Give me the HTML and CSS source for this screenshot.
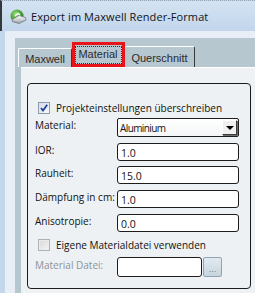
FILE: index.html
```html
<!DOCTYPE html>
<html lang="de">
<head>
<meta charset="utf-8">
<link rel="stylesheet" href="styles.css">
</head>
<body>
<div class="window">
  <div class="titlebar">
    <svg class="app-icon" width="17" height="16" viewBox="0 0 17 16">
      <defs>
        <radialGradient id="g" cx="0.4" cy="0.35" r="0.7">
          <stop offset="0" stop-color="#9fe07a"/>
          <stop offset="0.6" stop-color="#43a238"/>
          <stop offset="1" stop-color="#1f6a22"/>
        </radialGradient>
        <linearGradient id="s" x1="0" y1="0" x2="0" y2="1">
          <stop offset="0" stop-color="#ffffff"/>
          <stop offset="1" stop-color="#9aa3ab"/>
        </linearGradient>
      </defs>
      <circle cx="7" cy="7" r="6.5" fill="url(#g)"/>
      <path d="M2 10.5 L9 6.5 L15.5 8.5 L16 11 L9 14.5 L2.5 12.5 Z" fill="url(#s)" stroke="#6d767e" stroke-width="0.8"/>
      <path d="M5 7 L8 4.5 L10 6" fill="none" stroke="#ffffff" stroke-width="1.4"/>
    </svg>
    <span class="title">Export im Maxwell Render-Format</span>
  </div>
  <div class="client">
    <div class="dialog">
      <div class="tabs">
        <div class="tab tab-first">Maxwell</div>
        <div class="tab tab-selected"><span class="focus">Material</span></div>
        <div class="tab tab-last">Querschnitt</div>
      </div>
      <div class="page">
        <div class="group">
          <div class="check-row">
            <span class="cb cb-checked">
              <svg width="10" height="10" viewBox="0 0 10 10"><path d="M2 5 L4 7.5 L8.2 1.8" fill="none" stroke="#1f3f9e" stroke-width="1.8"/></svg>
            </span>
            <span class="check-text">Projekteinstellungen überschreiben</span>
          </div>
          <div class="fields">
            <span class="lbl">Material:</span>
            <div class="combo"><span class="combo-text">Aluminium</span><span class="drop"><span class="tri"></span></span></div>
            <span class="lbl lbl-ior">IOR:</span>
            <div class="input input-ior">1.0</div>
            <span class="lbl">Rauheit:</span>
            <div class="input">15.0</div>
            <span class="lbl">Dämpfung in cm:</span>
            <div class="input">1.0</div>
            <span class="lbl">Anisotropie:</span>
            <div class="input">0.0</div>
          </div>
          <div class="check-row check-row-2">
            <span class="cb cb-disabled"></span>
            <span class="check-text">Eigene Materialdatei verwenden</span>
          </div>
          <div class="file-row">
            <span class="lbl lbl-disabled">Material Datei:</span>
            <div class="input input-file"></div>
            <div class="browse">...</div>
          </div>
        </div>
      </div>
    </div>
  </div>
</div>
</body>
</html>
```

FILE: styles.css
```css
* { box-sizing: border-box; }

html, body {
  margin: 0;
  padding: 0;
}

body {
  width: 255px;
  height: 293px;
  overflow: hidden;
  font-family: "Open Sans", "Noto Sans", sans-serif;
  color: #111;
}

.window {
  width: 255px;
  height: 293px;
  display: flex;
  flex-direction: column;
  background: #c4d6eb;
}

.titlebar {
  height: 31px;
  flex: none;
  display: flex;
  align-items: center;
  padding-left: 8px;
  gap: 4px;
  background: linear-gradient(#d4e3f3, #c2d5ea);
  border-left: 2px solid #33383d;
  border-top: 1px dotted #9aa5b1;
}

.app-icon {
  flex: none;
  margin-top: 2px;
}

.title {
  font-size: 11px;
  letter-spacing: 0.08px;
  color: #101418;
  line-height: 14px;
  margin-top: 2px;
}

.client {
  flex: 1;
  margin-left: 5px;
  background: #e7eef6;
  padding: 7px 0 0 10px;
  display: flex;
}

.dialog {
  flex: 1;
  background: #b6c7d0;
  display: flex;
  flex-direction: column;
}

.tabs {
  height: 29px;
  flex: none;
  display: flex;
  align-items: flex-end;
  padding-left: 3px;
}

.tab {
  font-family: "Liberation Sans", Arial, sans-serif;
  font-size: 11px;
  font-weight: 400;
  color: #2a2a2a;
  height: 19px;
  display: flex;
  align-items: center;
  justify-content: center;
  border-top: 1px solid #ffffff;
  border-left: 1px solid #ffffff;
  border-right: 1px solid #3a3a3a;
  border-radius: 2px 2px 0 0;
  padding-top: 1px;
}

.tab-first {
  width: 54px;
}

.tab-last {
  width: 70px;
  height: 21px;
  border-left: none;
}

.tab-selected {
  width: 53px;
  height: 25px;
  border: 3px solid #e8141c;
  border-radius: 0;
  align-items: flex-start;
  padding-top: 1px;
}

.focus {
  border: 1px dotted #333;
  padding: 1px 3px 2px 2px;
  line-height: 13px;
}

.page {
  flex: 1;
  margin-left: 6px;
  background: #eef2f4;
  border-top: 1px solid #ffffff;
  padding: 15px 4px 0 6px;
}

.group {
  height: 206px;
  border: 1px solid #1c1c1c;
  border-radius: 4px;
  background: #edf1f3;
  padding: 16px 0 0 0;
  display: flex;
  flex-direction: column;
}

.check-row {
  height: 15px;
  display: flex;
  align-items: center;
  gap: 6px;
  padding-left: 10px;
}

.check-row-2 {
  margin-top: 5px;
}

.check-text {
  font-size: 10px;
  line-height: 14px;
  color: #111;
}

.cb {
  width: 12px;
  height: 12px;
  flex: none;
  display: flex;
  align-items: center;
  justify-content: center;
}

.cb-checked {
  border: 1px solid #8e9cae;
  background: linear-gradient(135deg, #d6dde6, #f7f9fb);
}

.cb-disabled {
  border: 1px solid #b1b1b1;
  background: linear-gradient(135deg, #d9d9d9, #f4f4f4);
  box-shadow: inset 0 0 0 1px #ebebeb;
}

.fields {
  margin-top: 3px;
  display: grid;
  grid-template-columns: 82px 122px;
  grid-auto-rows: 18px;
  row-gap: 6px;
  padding-left: 7px;
}

.lbl {
  font-size: 10px;
  line-height: 14px;
  color: #111;
  align-self: start;
  white-space: nowrap;
}

.lbl-ior {
  margin-top: 1px;
}

.lbl-disabled {
  color: #8c9499;
}

.combo {
  height: 19px;
  border: 1px solid #1d1d1d;
  border-radius: 2px;
  background: linear-gradient(#ffffff, #f4f6f8);
  display: flex;
  align-items: center;
  justify-content: space-between;
  padding: 0 1px 0 2px;
}

.combo-text {
  font-size: 10px;
  letter-spacing: -0.6px;
  line-height: 14px;
}

.drop {
  width: 15px;
  height: 15px;
  background: #f0f0f0;
  border-top: 1px solid #ffffff;
  border-left: 1px solid #ffffff;
  border-right: 1px solid #3c3c3c;
  border-bottom: 1px solid #3c3c3c;
  box-shadow: 1px 1px 0 #6d6d6d;
  display: flex;
  align-items: center;
  justify-content: center;
}

.tri {
  width: 0;
  height: 0;
  border-left: 4px solid transparent;
  border-right: 4px solid transparent;
  border-top: 4px solid #000;
}

.input {
  height: 18px;
  border: 1px solid #1d1d1d;
  border-radius: 3px;
  background: #ffffff;
  font-size: 10.5px;
  line-height: 16px;
  padding-left: 3px;
  padding-top: 1px;
  color: #111;
}

.input-ior {
  margin-top: 1px;
}

.file-row {
  margin-top: 5px;
  display: flex;
  align-items: flex-start;
  padding-left: 7px;
}

.file-row .lbl {
  width: 82px;
  margin-top: 1px;
}

.input-file {
  width: 85px;
  height: 20px;
}

.browse {
  width: 19px;
  height: 20px;
  margin-left: 1px;
  border: 1px solid #8ea5b5;
  border-radius: 2px;
  background: linear-gradient(#e2eaf0, #c7d5de);
  font-family: "Liberation Sans", Arial, sans-serif;
  font-size: 9px;
  color: #6f7f8b;
  display: flex;
  align-items: flex-end;
  justify-content: center;
  padding-bottom: 2px;
  line-height: 9px;
}
```
